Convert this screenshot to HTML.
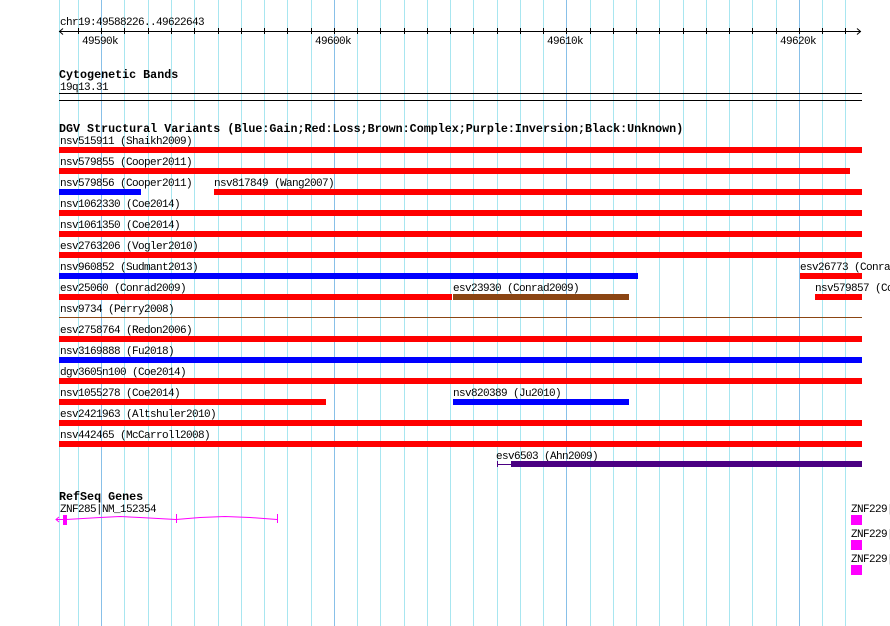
<!DOCTYPE html>
<html><head><meta charset="utf-8"><style>
html,body{margin:0;padding:0;background:#fff;}
svg{display:block}
text{font-family:"Liberation Mono","DejaVu Sans Mono",monospace;font-size:11px;letter-spacing:-0.6px;fill:#000}
.b{font-weight:bold;font-size:11.7px;letter-spacing:0}
.g{stroke:#a8e6f0;stroke-width:1}
.M{stroke:#88c0e8;stroke-width:1}
</style></head><body>
<svg width="890" height="626" xmlns="http://www.w3.org/2000/svg">
<rect width="890" height="626" fill="#fff"/>
<g class="g">
<line x1="59.5" y1="0" x2="59.5" y2="626"/>
<line x1="78.5" y1="0" x2="78.5" y2="626"/>
<line x1="124.5" y1="0" x2="124.5" y2="626"/>
<line x1="148.5" y1="0" x2="148.5" y2="626"/>
<line x1="171.5" y1="0" x2="171.5" y2="626"/>
<line x1="194.5" y1="0" x2="194.5" y2="626"/>
<line x1="218.5" y1="0" x2="218.5" y2="626"/>
<line x1="241.5" y1="0" x2="241.5" y2="626"/>
<line x1="264.5" y1="0" x2="264.5" y2="626"/>
<line x1="287.5" y1="0" x2="287.5" y2="626"/>
<line x1="311.5" y1="0" x2="311.5" y2="626"/>
<line x1="357.5" y1="0" x2="357.5" y2="626"/>
<line x1="380.5" y1="0" x2="380.5" y2="626"/>
<line x1="404.5" y1="0" x2="404.5" y2="626"/>
<line x1="427.5" y1="0" x2="427.5" y2="626"/>
<line x1="450.5" y1="0" x2="450.5" y2="626"/>
<line x1="473.5" y1="0" x2="473.5" y2="626"/>
<line x1="497.5" y1="0" x2="497.5" y2="626"/>
<line x1="520.5" y1="0" x2="520.5" y2="626"/>
<line x1="543.5" y1="0" x2="543.5" y2="626"/>
<line x1="590.5" y1="0" x2="590.5" y2="626"/>
<line x1="613.5" y1="0" x2="613.5" y2="626"/>
<line x1="636.5" y1="0" x2="636.5" y2="626"/>
<line x1="659.5" y1="0" x2="659.5" y2="626"/>
<line x1="683.5" y1="0" x2="683.5" y2="626"/>
<line x1="706.5" y1="0" x2="706.5" y2="626"/>
<line x1="729.5" y1="0" x2="729.5" y2="626"/>
<line x1="752.5" y1="0" x2="752.5" y2="626"/>
<line x1="776.5" y1="0" x2="776.5" y2="626"/>
<line x1="822.5" y1="0" x2="822.5" y2="626"/>
<line x1="845.5" y1="0" x2="845.5" y2="626"/>
</g>
<g class="M">
<line x1="101.5" y1="0" x2="101.5" y2="626"/>
<line x1="334.5" y1="0" x2="334.5" y2="626"/>
<line x1="566.5" y1="0" x2="566.5" y2="626"/>
<line x1="799.5" y1="0" x2="799.5" y2="626"/>
</g>
<text x="60" y="25">chr19:49588226..49622643</text>
<line x1="59" y1="31.5" x2="861" y2="31.5" stroke="#000"/>
<path d="M63 28.5 L59.5 31.5 L63 34.5 M857 28.5 L860.5 31.5 L857 34.5" stroke="#000" fill="none"/>
<g stroke="#000">
<path d="M78.5 28v6M101.5 28v6M124.5 28v6M148.5 28v6M171.5 28v6M194.5 28v6M218.5 28v6M241.5 28v6M264.5 28v6M287.5 28v6M311.5 28v6M334.5 28v6M357.5 28v6M380.5 28v6M404.5 28v6M427.5 28v6M450.5 28v6M473.5 28v6M497.5 28v6M520.5 28v6M543.5 28v6M566.5 28v6M590.5 28v6M613.5 28v6M636.5 28v6M659.5 28v6M683.5 28v6M706.5 28v6M729.5 28v6M752.5 28v6M776.5 28v6M799.5 28v6M822.5 28v6M845.5 28v6"/>
</g>
<text x="82" y="44">49590k</text>
<text x="315" y="44">49600k</text>
<text x="547" y="44">49610k</text>
<text x="780" y="44">49620k</text>
<text class="b" x="59" y="78">Cytogenetic Bands</text>
<text x="60" y="90">19q13.31</text>
<rect x="59" y="93" width="803" height="1" fill="#000"/>
<rect x="59" y="100" width="803" height="1" fill="#000"/>
<text class="b" x="59" y="132">DGV Structural Variants (Blue:Gain;Red:Loss;Brown:Complex;Purple:Inversion;Black:Unknown)</text>
<text x="60" y="144">nsv515911 (Shaikh2009)</text>
<rect x="59" y="147" width="803" height="6" fill="#f00"/>
<text x="60" y="165">nsv579855 (Cooper2011)</text>
<rect x="59" y="168" width="791" height="6" fill="#f00"/>
<text x="60" y="186">nsv579856 (Cooper2011)</text>
<rect x="59" y="189" width="82" height="6" fill="#00f"/>
<text x="214" y="186">nsv817849 (Wang2007)</text>
<rect x="214" y="189" width="648" height="6" fill="#f00"/>
<text x="60" y="207">nsv1062330 (Coe2014)</text>
<rect x="59" y="210" width="803" height="6" fill="#f00"/>
<text x="60" y="228">nsv1061350 (Coe2014)</text>
<rect x="59" y="231" width="803" height="6" fill="#f00"/>
<text x="60" y="249">esv2763206 (Vogler2010)</text>
<rect x="59" y="252" width="803" height="6" fill="#f00"/>
<text x="60" y="270">nsv960852 (Sudmant2013)</text>
<rect x="59" y="273" width="579" height="6" fill="#00f"/>
<text x="800" y="270">esv26773 (Conrad2009)</text>
<rect x="800" y="273" width="62" height="6" fill="#f00"/>
<text x="60" y="291">esv25060 (Conrad2009)</text>
<rect x="59" y="294" width="393" height="6" fill="#f00"/>
<text x="453" y="291">esv23930 (Conrad2009)</text>
<rect x="453" y="294" width="176" height="6" fill="#8b4513"/>
<text x="815" y="291">nsv579857 (Cooper2011)</text>
<rect x="815" y="294" width="47" height="6" fill="#f00"/>
<text x="60" y="312">nsv9734 (Perry2008)</text>
<rect x="59" y="317" width="803" height="1" fill="#8b4513"/>
<text x="60" y="333">esv2758764 (Redon2006)</text>
<rect x="59" y="336" width="803" height="6" fill="#f00"/>
<text x="60" y="354">nsv3169888 (Fu2018)</text>
<rect x="59" y="357" width="803" height="6" fill="#00f"/>
<text x="60" y="375">dgv3605n100 (Coe2014)</text>
<rect x="59" y="378" width="803" height="6" fill="#f00"/>
<text x="60" y="396">nsv1055278 (Coe2014)</text>
<rect x="59" y="399" width="267" height="6" fill="#f00"/>
<text x="453" y="396">nsv820389 (Ju2010)</text>
<rect x="453" y="399" width="176" height="6" fill="#00f"/>
<text x="60" y="417">esv2421963 (Altshuler2010)</text>
<rect x="59" y="420" width="803" height="6" fill="#f00"/>
<text x="60" y="438">nsv442465 (McCarroll2008)</text>
<rect x="59" y="441" width="803" height="6" fill="#f00"/>
<text x="496" y="459">esv6503 (Ahn2009)</text>
<rect x="497" y="461" width="1" height="6" fill="#4b0082"/>
<rect x="497" y="464" width="14" height="1" fill="#4b0082"/>
<rect x="511" y="461" width="351" height="6" fill="#4b0082"/>
<text class="b" x="59" y="500">RefSeq Genes</text>
<text x="60" y="512">ZNF285|NM_152354</text>
<g stroke="#f0f" fill="none">
<path d="M56 519.5 L66 519.5 M59 517 L56 519.5 L59 522"/>
<path d="M66 519.5 L100 517.5 L120 516.5 L140 517.5 L176 519.5 L200 517.5 L225 516.5 L250 517.5 L277 519.5"/>
<path d="M176.5 514v9M277.5 514v9"/>
</g>
<rect x="63" y="515" width="4" height="10" fill="#f0f"/>
<text x="851" y="512">ZNF229|NM_014518</text>
<rect x="851" y="515" width="11" height="10" fill="#f0f"/>
<text x="851" y="537">ZNF229|NM_001278510</text>
<rect x="851" y="540" width="11" height="10" fill="#f0f"/>
<text x="851" y="562">ZNF229|NM_001278511</text>
<rect x="851" y="565" width="11" height="10" fill="#f0f"/>
</svg>
</body></html>
